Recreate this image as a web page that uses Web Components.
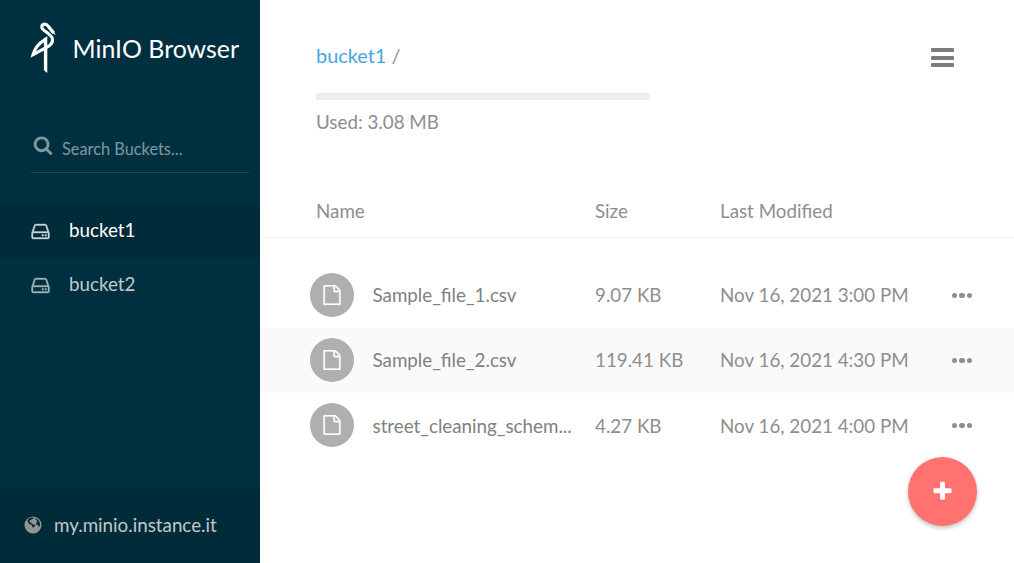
<!DOCTYPE html>
<html lang="en">
<head>
<meta charset="utf-8">
<title>MinIO Browser</title>
<style>
html,body{margin:0;height:100%;overflow:hidden;background:#fff}
body{font-family:Lato,sans-serif;font-size:18.8px;line-height:24px;color:#8e8e8e}
</style>
</head>
<body>
<minio-app></minio-app>
<script>
const ICONS = {
  search:'<path d="M1216 832q0-185-131.500-316.500t-316.500-131.500-316.500 131.500-131.500 316.500 131.500 316.500 316.500 131.500 316.500-131.500 131.500-316.500zm512 832q0 52-38 90t-90 38q-54 0-90-38l-343-342q-179 124-399 124-143 0-273.500-55.500t-225-150-150-225-55.500-273.500 55.500-273.500 150-225 225-150 273.500-55.500 273.500 55.500 225 150 150 225 55.500 273.500q0 220-124 399l343 343q37 37 37 90z"/>',
  disk:'<path stroke="currentColor" stroke-width="30" d="M1168 1216q0 33-23.500 56.500t-56.500 23.500-56.500-23.500-23.500-56.500 23.500-56.500 56.500-23.500 56.500 23.500 23.500 56.500zm256 0q0 33-23.500 56.500t-56.500 23.500-56.500-23.500-23.500-56.500 23.500-56.500 56.500-23.500 56.500 23.500 23.500 56.500zm112 160v-320q0-13-9.500-22.500t-22.500-9.500h-1216q-13 0-22.500 9.500t-9.500 22.500v320q0 13 9.500 22.500t22.500 9.500h1216q13 0 22.500-9.500t9.500-22.500zm-1230-480h1180l-157-482q-4-13-16-21.500t-26-8.500h-782q-14 0-26 8.500t-16 21.500zm1358 160v320q0 66-47 113t-113 47h-1216q-66 0-113-47t-47-113v-320q0-25 16-75l197-606q17-53 63-86t101-33h782q55 0 101 33t63 86l197 606q16 50 16 75z"/>',
  file:'<path stroke="currentColor" stroke-width="24" d="M1596 380q28 28 48 76t20 88v1152q0 40-28 68t-68 28h-1344q-40 0-68-28t-28-68v-1600q0-40 28-68t68-28h896q40 0 88 20t76 48zm-444-244v376h376q-10-29-22-41l-313-313q-12-12-41-22zm384 1528v-1024h-416q-40 0-68-28t-28-68v-416h-768v1536h1280z"/>',
  globe:'<path fill-rule="evenodd" d="M896 128a768 768 0 1 0 0 1536a768 768 0 1 0 0-1536zM500 330L650 240L860 215L960 250L900 350L780 370L720 450L590 500L570 600L690 680L760 760L850 790L900 870L1020 860L1110 930L1080 1010L960 1060L900 1160L830 1060L800 930L680 860L560 800L450 660L400 500zM1090 300L1280 370L1430 520L1520 720L1530 900L1450 1080L1380 1040L1340 900L1230 880L1150 780L1200 690L1310 640L1230 560L1240 470L1120 400z"/>',
  plus:'<path d="M1600 736v192q0 40-28 68t-68 28h-416v416q0 40-28 68t-68 28h-192q-40 0-68-28t-28-68v-416h-416q-40 0-68-28t-28-68v-192q0-40 28-68t68-28h416v-416q0-40 28-68t68-28h192q40 0 68 28t28 68v416h416q40 0 68 28t28 68z"/>'
};
function define(name, html, setup) {
  customElements.define(name, class extends HTMLElement {
    constructor() {
      super();
      const t = document.createElement('template');
      t.innerHTML = html;
      this.attachShadow({mode:'open'}).append(t.content.cloneNode(true));
    }
    connectedCallback() { if (setup) setup(this, this.shadowRoot); }
  });
}

define('ui-icon', `<style>:host{display:block;flex:none;width:var(--s,22px);height:var(--s,22px)}svg{display:block;width:100%;height:100%;fill:currentColor}</style><svg viewBox="0 0 1792 1792"></svg>`,
  (el, root) => { root.querySelector('svg').innerHTML = ICONS[el.getAttribute('name')]; });

define('stork-logo', `<style>:host{display:block;width:28px;height:52px}svg{display:block}</style>
<svg width="28" height="52" viewBox="30 22 28 52" fill="none" stroke="#fff">
<path d="M53.800 33 48.200 26.300C45.600 22.600 41.300 24.300 41.900 27.700C42.300 30.300 51.300 34.400 52.200 38.200C53.200 42.200 51 45.300 46.500 47.300L33 54.600C34.500 49 38.500 43.500 45 39.600" stroke-width="3.100" stroke-linejoin="miter"/>
<path d="M43.900 38.200 47.300 36.200V73L43.900 70.200z" fill="#fff" stroke="none"/>
<path d="M46.500 24 49.500 25.500 56.200 35.300 51 32 46.500 26z" fill="#fff" stroke="none"/>
</svg>`);

define('bucket-item', `<style>
:host{display:flex;align-items:center;height:54px;padding-left:30px;gap:18px;color:rgba(255,255,255,.75);box-sizing:border-box}
:host([active]){background:rgba(0,0,0,.1);color:#fff}
ui-icon{--s:21px;opacity:.8;margin-top:0}span{margin-top:-3px}
</style><ui-icon name="disk"></ui-icon><span><slot></slot></span>`);

define('side-bar', `<style>
:host{display:flex;flex-direction:column;width:260px;height:100%;background:#00303f;color:#fff;flex:none}
header{display:flex;gap:14.500px;padding:22px 0 0 30px;height:75px}
h1{margin:10px 0 0;font-size:24.900px;line-height:32px;font-weight:400;white-space:nowrap}
.search{display:flex;margin:29px 11px 0 31px;height:46px;border-bottom:1px solid rgba(255,255,255,.13);color:rgba(255,255,255,.5);font-size:16.350px}
.search ui-icon{--s:20px;margin:9px 0 0 1.500px}.search span{margin:11px 0 0 9.500px}
nav{margin-top:31px;flex:1}
footer{display:flex;height:76px;background:rgba(0,0,0,.1);align-items:center;padding-left:23px;gap:11px;color:rgba(255,255,255,.75)}
footer ui-icon{--s:20px;color:#949494}
</style>
<header><stork-logo></stork-logo><h1>MinIO Browser</h1></header>
<div class="search"><ui-icon name="search"></ui-icon><span>Search Buckets...</span></div>
<nav><slot></slot></nav>
<footer><ui-icon name="globe"></ui-icon><span>my.minio.instance.it</span></footer>`);

define('storage-header', `<style>
:host{display:flex;justify-content:space-between;height:186px;padding:43px 60px 0 56px;box-sizing:border-box}
a{color:#46a5e0}.path{white-space:pre;font-size:19.900px}
.bar{width:334px;height:7px;border-radius:2px;background:#ededed;margin:26px 0 10px}
.menu{width:23px;height:19px;margin-top:5px;display:flex;flex-direction:column;justify-content:space-between}
.menu i{height:4px;border-radius:1px;background:#7c7c7c}
</style>
<div><div class="path"><a>bucket1</a> /</div><div class="bar"></div><div>Used: 3.08 MB</div></div>
<div class="menu"><i></i><i></i><i></i></div>`);

define('list-head', `<style>
:host{display:grid;grid-template-columns:279px 125px 1fr;padding:13px 0 0 56px;height:52px;box-sizing:border-box;border-bottom:1px solid #eee;margin-bottom:25px}
</style><span>Name</span><span>Size</span><span>Last Modified</span>`);

define('file-row', `<style>
:host{display:grid;grid-template-columns:62.500px 222.500px 125px 229px 1fr;height:65px;padding:0 0 1px 50px;align-items:center;box-sizing:border-box;white-space:nowrap}
:host([alt]){background:#fafafa}
:host([last]) span{padding-top:1px}
.disc{width:44px;height:44px;border-radius:50%;background:#afafaf;display:flex;align-items:center;justify-content:center;color:#fff;--s:20px}
.name{width:201px;color:#818181}
.more{display:flex;gap:2.200px;padding:1px 0 0 3px}
.more i{width:5.300px;height:5.300px;border-radius:50%;background:#8e8e8e}
</style>
<div class="disc"><ui-icon name="file"></ui-icon></div><span class="name"><slot></slot></span><span id="size"></span><span id="date"></span><div class="more"><i></i><i></i><i></i></div>`,
  (el, root) => { for (const k of ['size','date']) root.getElementById(k).textContent = el.getAttribute(k); });

define('add-button', `<style>
:host{display:flex;align-items:center;justify-content:center;width:69px;height:69px;padding-right:1px;box-sizing:border-box;border-radius:50%;background:#ff726f;color:#fff;box-shadow:0 2px 4px rgba(0,0,0,.25);--s:23px}
</style><ui-icon name="plus"></ui-icon>`);

define('minio-app', `<style>
:host{display:flex;position:relative;width:1014px;height:563px}
main{flex:1;min-width:0}
add-button{position:absolute;right:37px;bottom:37px}
</style>
<side-bar><bucket-item active>bucket1</bucket-item><bucket-item>bucket2</bucket-item></side-bar>
<main><storage-header></storage-header><list-head></list-head>
<file-row size="9.07 KB" date="Nov 16, 2021 3:00 PM">Sample_file_1.csv</file-row>
<file-row alt size="119.41 KB" date="Nov 16, 2021 4:30 PM">Sample_file_2.csv</file-row>
<file-row last size="4.27 KB" date="Nov 16, 2021 4:00 PM">street_cleaning_schem...</file-row>
</main><add-button></add-button>`);
</script>
</body>
</html>
